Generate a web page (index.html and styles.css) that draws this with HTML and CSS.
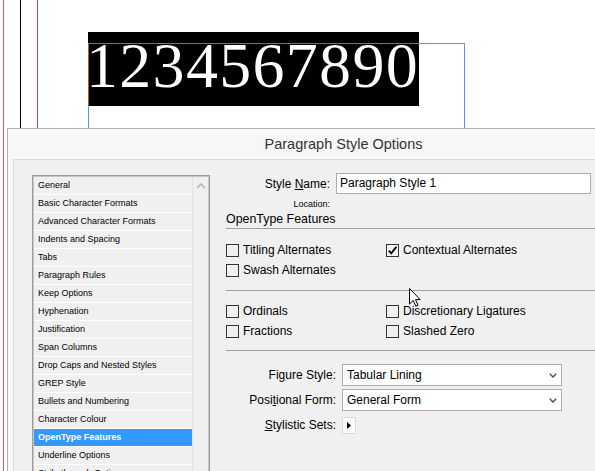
FILE: index.html
```html
<!DOCTYPE html>
<html lang="en">

<head>
    <meta charset="UTF-8">
    <title>Paragraph Style Options</title>
    <link rel="stylesheet" href="styles.css">
</head>

<body>
    <div class="desk">
        <!-- page guides -->
        <div class="guide guide-red"></div>
        <div class="guide guide-black"></div>
        <div class="guide guide-purple"></div>

        <!-- text frame with selected digits -->
        <div class="frame"></div>
        <div class="numbers">1234567890</div>
        <div class="highlight"></div>

        <div class="dialog">
            <div class="dialog-title">Paragraph Style Options</div>
            <div class="dialog-body">
                <div class="nav">
                    <ul class="nav-list">
                        <li class="nav-item">General</li>
                        <li class="nav-item">Basic Character Formats</li>
                        <li class="nav-item">Advanced Character Formats</li>
                        <li class="nav-item">Indents and Spacing</li>
                        <li class="nav-item">Tabs</li>
                        <li class="nav-item">Paragraph Rules</li>
                        <li class="nav-item">Keep Options</li>
                        <li class="nav-item">Hyphenation</li>
                        <li class="nav-item">Justification</li>
                        <li class="nav-item">Span Columns</li>
                        <li class="nav-item">Drop Caps and Nested Styles</li>
                        <li class="nav-item">GREP Style</li>
                        <li class="nav-item">Bullets and Numbering</li>
                        <li class="nav-item">Character Colour</li>
                        <li class="nav-item is-active">OpenType Features</li>
                        <li class="nav-item">Underline Options</li>
                        <li class="nav-item">Strikethrough Options</li>
                    </ul>
                    <div class="nav-scroll">
                        <svg width="10" height="6" viewBox="0 0 10 6">
                            <polyline points="1,5 5,1 9,5" fill="none" stroke="#b4b4b4" stroke-width="1.6"></polyline>
                        </svg>
                    </div>
                </div>

                <div class="panel">
                    <div class="name-row">
                        <label class="label">Style <u>N</u>ame:</label>
                        <div class="text-input">Paragraph Style 1</div>
                    </div>
                    <div class="location">Location:</div>
                    <div class="section-title">OpenType Features</div>

                    <div class="options">
                        <div class="check"><span class="box"></span>Titling Alternates</div>
                        <div class="check">
                            <span class="box">
                                <svg width="11" height="11" viewBox="0 0 11 11">
                                    <polyline points="1.8,5.6 4.3,8.4 9.4,1.8" fill="none" stroke="#000" stroke-width="1.8"></polyline>
                                </svg>
                            </span>Contextual Alternates
                        </div>
                        <div class="check"><span class="box"></span>Swash Alternates</div>
                    </div>

                    <div class="options options-last">
                        <div class="check"><span class="box"></span>Ordinals</div>
                        <div class="check"><span class="box"></span>Discretionary Ligatures</div>
                        <div class="check"><span class="box"></span>Fractions</div>
                        <div class="check"><span class="box"></span>Slashed Zero</div>
                    </div>

                    <div class="fields">
                        <label class="label">Fi<u>g</u>ure Style:</label>
                        <div class="select">
                            Tabular Lining
                            <svg width="8" height="5" viewBox="0 0 8 5">
                                <polyline points="0.8,0.8 4,4 7.2,0.8" fill="none" stroke="#555" stroke-width="1.5"></polyline>
                            </svg>
                        </div>
                        <label class="label">Posi<u>t</u>ional Form:</label>
                        <div class="select">
                            General Form
                            <svg width="8" height="5" viewBox="0 0 8 5">
                                <polyline points="0.8,0.8 4,4 7.2,0.8" fill="none" stroke="#555" stroke-width="1.5"></polyline>
                            </svg>
                        </div>
                        <label class="label"><u>S</u>tylistic Sets:</label>
                        <div class="sets-button">
                            <svg width="4" height="7" viewBox="0 0 4 7">
                                <polygon points="0,0 4,3.5 0,7" fill="#000"></polygon>
                            </svg>
                        </div>
                    </div>
                </div>
            </div>
        </div>

        <!-- mouse pointer -->
        <svg class="cursor" width="12" height="19" viewBox="0 0 12 19">
            <polygon points="0.5,0.5 0.5,16 4.2,12.4 6.8,18.2 9,17.2 6.5,11.6 11.2,11.6" fill="#fff" stroke="#000" stroke-width="1"></polygon>
        </svg>
    </div>
</body>

</html>
```

FILE: styles.css
```css
* {
    box-sizing: border-box;
    margin: 0;
    padding: 0;
}

body {
    font-family: "Liberation Sans", Arial, sans-serif;
    background-color: #fff;
    color: #000;
}

.desk {
    position: relative;
    width: 595px;
    height: 471px;
    overflow: hidden;
    background-color: #fff;
}

/* Guides on the page */
.guide {
    position: absolute;
    top: 0;
    width: 1px;
    height: 128px;
}

.guide-red {
    left: 3px;
    height: 471px;
    background-color: #f04e6a;
}

.guide-black {
    left: 20px;
    background-color: #000;
}

.guide-purple {
    left: 37px;
    background-color: #a040ff;
}

.frame {
    position: absolute;
    left: 88px;
    top: 43px;
    width: 377px;
    height: 100px;
    border: 1px solid #5596f0;
}

.numbers {
    position: absolute;
    left: 86px;
    top: 34px;
    font-family: "Liberation Serif", "Times New Roman", serif;
    font-size: 64px;
    line-height: 64px;
    letter-spacing: 1.3px;
    white-space: nowrap;
    color: #000;
}

/* text selection inverts what is under it */
.highlight {
    position: absolute;
    left: 88px;
    top: 32px;
    width: 331px;
    height: 74px;
    background-color: #fff;
    mix-blend-mode: difference;
}

/* Dialog */
.dialog {
    position: absolute;
    left: 7px;
    top: 128px;
    width: 673px;
    height: 370px;
    padding: 0 5px;
    background-color: #f7f7f7;
    border: 1px solid #b4b4b4;
}

.dialog-title {
    height: 30px;
    line-height: 31px;
    text-align: center;
    font-size: 14.5px;
    color: #333;
}

.dialog-body {
    display: flex;
    height: 400px;
    padding: 13px 0 0 18px;
    background-color: #f0f0f0;
    border: 1px solid #dadada;
}

.nav {
    display: flex;
    width: 178px;
    height: 300px;
    margin-top: 2px;
    padding: 1px;
    border: 1px solid #9d9d9d;
    background-color: #c6c6c6;
}

.nav-list {
    list-style: none;
    width: 158px;
    background-color: #f0f0f0;
}

.nav-item {
    height: 18px;
    line-height: 17px;
    padding-left: 4px;
    border-bottom: 1px solid #fff;
    font-size: 9px;
    white-space: nowrap;
    overflow: hidden;
}

.nav-item.is-active {
    background-color: #3399ff;
    color: #fff;
    font-weight: bold;
}

.nav-scroll {
    flex: 1;
    display: flex;
    justify-content: center;
    padding-top: 6px;
    background-color: #f0f0f0;
    border-left: 1px solid #e2e2e2;
}

.nav-scroll svg {
    display: block;
}

/* Right panel */
.panel {
    flex: 1;
    margin-left: 16px;
}

.label {
    text-align: right;
    font-size: 12px;
    white-space: nowrap;
}

.name-row {
    display: grid;
    grid-template-columns: 104px 255px;
    column-gap: 6px;
    align-items: center;
}

.text-input {
    height: 21px;
    line-height: 19px;
    padding-left: 3px;
    font-size: 12px;
    background-color: #fff;
    border: 1px solid #abadb3;
}

.location {
    width: 104px;
    margin-top: 5px;
    text-align: right;
    font-size: 9px;
    line-height: 10px;
}

.section-title {
    margin-top: 1px;
    font-size: 12.4px;
    line-height: 18px;
    border-bottom: 1px solid #a0a0a0;
}

.options {
    display: grid;
    grid-template-columns: 160px 1fr;
    grid-auto-rows: 20px;
    padding: 11px 0 10px;
    border-bottom: 1px solid #a0a0a0;
}

.options-last {
    padding-top: 10px;
    padding-bottom: 9px;
}

.check {
    display: flex;
    align-items: center;
    gap: 4px;
    font-size: 12px;
    white-space: nowrap;
}

.box {
    flex: none;
    display: flex;
    align-items: center;
    justify-content: center;
    width: 13px;
    height: 13px;
    border: 1px solid #333;
}

.fields {
    display: grid;
    grid-template-columns: 110px 220px;
    grid-auto-rows: 22px;
    column-gap: 6px;
    row-gap: 3px;
    align-items: center;
    padding-top: 13px;
}

.select {
    display: flex;
    align-items: center;
    justify-content: space-between;
    height: 22px;
    padding: 0 4px;
    font-size: 12px;
    background-color: #fff;
    border: 1px solid #acacac;
}

.sets-button {
    display: flex;
    align-items: center;
    justify-content: center;
    width: 14px;
    height: 17px;
    background-color: #fbfbfb;
    border: 1px solid #d9d9d9;
}

.cursor {
    position: absolute;
    left: 409px;
    top: 288px;
}
```
